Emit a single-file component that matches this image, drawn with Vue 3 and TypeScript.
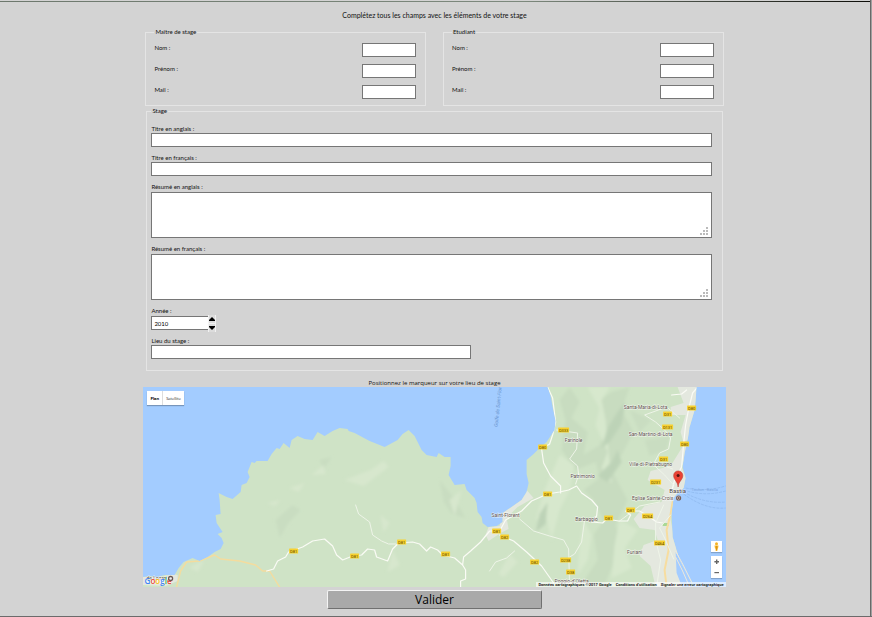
<script setup lang="ts">
import { reactive, ref } from 'vue'

interface Person { id: string; title: string; nom: string; prenom: string; mail: string }
interface Spot { text: string; x: number; y: number }

const people = reactive<Person[]>([
  { id: 'maitre', title: 'Maître de stage', nom: '', prenom: '', mail: '' },
  { id: 'etudiant', title: 'Etudiant', nom: '', prenom: '', mail: '' },
])
const stage = reactive({ titreEn: '', titreFr: '', resumeEn: '', resumeFr: '', annee: 2010, lieu: '' })
const mapType = ref<'plan' | 'satellite'>('plan')

const shields: Spot[] = [
  { text: 'D81', x: 294, y: 551 }, { text: 'D81', x: 355, y: 556 }, { text: 'D81', x: 402, y: 542 },
  { text: 'D81', x: 446, y: 554 }, { text: 'D81', x: 497, y: 531 }, { text: 'D82', x: 505, y: 537 },
  { text: 'D82', x: 535, y: 562 }, { text: 'D238', x: 566, y: 560 }, { text: 'D38', x: 571, y: 572 },
  { text: 'D333', x: 564, y: 430 }, { text: 'D80', x: 543, y: 447 }, { text: 'D81', x: 548, y: 494 },
  { text: 'D81', x: 609, y: 518 }, { text: 'D81', x: 631, y: 510 }, { text: 'D264', x: 648, y: 516 },
  { text: 'D464', x: 660, y: 543 }, { text: 'D231', x: 656, y: 482 }, { text: 'D31', x: 664, y: 459 },
  { text: 'D80', x: 685, y: 444 }, { text: 'D131', x: 668, y: 427 }, { text: 'D31', x: 668, y: 414 },
  { text: 'D80', x: 692, y: 408 },
]
const towns: Spot[] = [
  { text: 'Santa-Maria-di-Lota', x: 646, y: 409 }, { text: 'San-Martino-di-Lota', x: 651, y: 436 },
  { text: 'Ville-di-Pietrabugno', x: 651, y: 466 }, { text: 'Farinole', x: 574, y: 442 },
  { text: 'Patrimonio', x: 583, y: 478 }, { text: 'Barbaggio', x: 587, y: 521 },
  { text: 'Saint-Florent', x: 506, y: 517 }, { text: 'Furiani', x: 635, y: 554 },
  { text: 'Poggio-d’Oletta', x: 572, y: 583 }, { text: 'Eglise Sainte-Croix', x: 653, y: 500 },
]
const shieldWidth = (s: Spot): number => (s.text.length > 3 ? 11 : 9)
</script>

<template>
  <div class="page">
    <form class="content" @submit.prevent>
      <p class="intro">Complétez tous les champs avec les éléments de votre stage</p>

      <div class="people">
        <fieldset v-for="p in people" :key="p.id" class="person">
          <legend>{{ p.title }}</legend>
          <div class="row">
            <label :for="p.id + '-nom'">Nom :</label>
            <input :id="p.id + '-nom'" v-model="p.nom" type="text" />
          </div>
          <div class="row">
            <label :for="p.id + '-prenom'">Prénom :</label>
            <input :id="p.id + '-prenom'" v-model="p.prenom" type="text" />
          </div>
          <div class="row">
            <label :for="p.id + '-mail'">Mail :</label>
            <input :id="p.id + '-mail'" v-model="p.mail" type="email" />
          </div>
        </fieldset>
      </div>

      <fieldset class="stage">
        <legend>Stage</legend>
        <div class="field">
          <label for="titre-en">Titre en anglais :</label>
          <input id="titre-en" v-model="stage.titreEn" type="text" />
        </div>
        <div class="field">
          <label for="titre-fr">Titre en français :</label>
          <input id="titre-fr" v-model="stage.titreFr" type="text" />
        </div>
        <div class="field spaced">
          <label for="resume-en">Résumé en anglais :</label>
          <div class="area">
            <textarea id="resume-en" v-model="stage.resumeEn"></textarea>
            <svg class="grip" viewBox="0 0 8 8" aria-hidden="true"><path d="M6 0h2v2H6zM3 3h2v2H3zM6 3h2v2H6zM0 6h2v2H0zM3 6h2v2H3zM6 6h2v2H6z" /></svg>
          </div>
        </div>
        <div class="field spaced">
          <label for="resume-fr">Résumé en français :</label>
          <div class="area">
            <textarea id="resume-fr" v-model="stage.resumeFr"></textarea>
            <svg class="grip" viewBox="0 0 8 8" aria-hidden="true"><path d="M6 0h2v2H6zM3 3h2v2H3zM6 3h2v2H6zM0 6h2v2H0zM3 6h2v2H3zM6 6h2v2H6z" /></svg>
          </div>
        </div>
        <div class="field spaced">
          <label for="annee">Année :</label>
          <div class="year">
            <input id="annee" v-model.number="stage.annee" type="number" />
            <div class="spin">
              <button type="button" aria-label="Augmenter" @click="stage.annee++"><svg viewBox="0 0 6 8"><path d="M3 2 6 5v1H0V5z" /></svg></button>
              <button type="button" aria-label="Diminuer" @click="stage.annee--"><svg viewBox="0 0 6 8"><path d="M3 6 0 3V2h6v1z" /></svg></button>
            </div>
          </div>
        </div>
        <div class="field">
          <label for="lieu">Lieu du stage :</label>
          <input id="lieu" v-model="stage.lieu" class="lieu" type="text" />
        </div>
      </fieldset>

      <p class="caption">Positionnez le marqueur sur votre lieu de stage</p>

      <div class="map">
        <svg class="canvas" viewBox="143 387 583 200" preserveAspectRatio="xMidYMid slice">
          <defs>
            <filter id="soft" x="-20%" y="-20%" width="140%" height="140%"><feGaussianBlur stdDeviation="1.5" /></filter>
            <clipPath id="land">
              <path d="M143 577 150 576 158 577 165 575 175 575 179 568 184 562 193 558 200 561 208 557 215 552 221 549 224 543 222 538 218 534 223 532 217 523 216 515 221 514 220 500 219 493 227 497 233 499 241 492 242 485 247 483 250 477 248 472 252 462 255 463 257 461 268 461 272 454 277 448 280 449 284 443 290 448 292 440 298 436 305 439 313 440 318 432 325 436 333 431 340 428 348 429 349 431 355 433 370 441 385 447 398 440 403 434 409 430 415 436 418 442 422 450 427 455 437 457 439 453 445 457 451 457 451 466 449 475 455 485 465 484 467 490 475 498 477 503 478 512 482 517 483 523 488 527 497 526 503 522 503 513 512 507 522 500 527 492 529 483 527 474 527 460 534 454 540 448 547 442 551 436 555 430 556 421 553 407 551 396 548 387H697L696 400 695 410 690 427 688 440 685 453 683 467 686 478 684 488 678 493 674 498 672 513 673 537 680 560 692 582 694 587H143Z" />
            </clipPath>
          </defs>
          <path d="M143 387h583v200H143z" fill="#a3ccff" />
          <g clip-path="url(#land)">
            <path d="M143 387h583v200H143z" fill="#cfe3c6" />
            <g filter="url(#soft)">
              <path d="M570 387 580 402 572 418 588 432 584 455 600 445 606 425 600 400 612 392 630 387 622 410 634 432 622 455 612 470 628 500 616 525 622 545 604 587H580L598 560 594 535 604 520 594 500 584 490 600 478 596 462 576 470 562 450 566 420 560 400Z" fill="#c8dcc0" />
              <path d="M588 387 600 408 596 425 608 452 602 468 612 484 606 420 602 400 610 387ZM560 455 575 465 570 490 560 510 552 540 546 515 536 520 545 490ZM584 520 592 535 588 560 578 575 580 545ZM620 520 638 530 625 548 632 568 612 578 615 545Z" fill="#d7e8cd" />
              <path d="M618 412 626 402 622 424 610 442 602 448 608 428ZM598 476 612 462 618 450 622 462 608 482ZM540 514 548 502 546 524 536 532Z" fill="#bdd3b7" />
              <path d="M276 520 293 505 301 510 288 524 280 538ZM440 480 456 500 466 518 452 514 444 502ZM320 460 332 457 324 470ZM630 410 652 420 640 432ZM645 440 670 437 667 450 650 456Z" fill="#c9ddc1" />
              <path d="M510 554 518 562 504 577 499 574ZM268 503 281 500 275 506ZM290 488 305 483 299 492ZM312 475 324 465 326 474ZM345 480 371 470 384 461 389 467 364 486ZM381 515 390 523 384 532ZM393 550 400 565 388 572ZM190 567 205 560 198 572ZM450 500 462 490 455 516Z" fill="#d7e7cd" />
            </g>
            <g fill="#e4e8df">
              <path d="M503 513 527 490 534 498 518 507 507 518 509 529 501 533 489 541 486 535 489 527 500 526Z" />
              <path d="M678 387H698V412L690 427 690 438 684 443 681 432 686 415 672 415 671 407 684 403ZM684 445H690L682 467 687 480 684 492 674 498 671 520 677 550 693 587H656L651 566 640 556 644 545 658 540 655 530 640 528 634 519 645 506 662 502 665 490 648 480 651 471 671 466Z" />
              <path d="M143 577 164 577 172 574 178 575 178 581 166 586 143 585Z" />
            </g>
            <path d="M676 552 687 572 694 588 683 588 677 573Z" fill="#a3ccff" />
            <path d="M663 523h6v3h-6z" fill="#a9d897" />
            <g fill="none" stroke-linejoin="round" stroke-linecap="round">
              <path d="M177 587 181 571 187 562 200 561 215 555 221 559 240 561 256 565 263 571 270 571 280 587" stroke="#f4dc9e" stroke-width="1.4" />
              <path d="M667 587 665 570 669 550 667 530 671 514 673 502" stroke="#f7dda0" stroke-width="2" />
              <g stroke="#fafbf5" stroke-width="1.2">
                <path d="M267 571 274 569 278 561 286 557 289 552 303 547 313 541 325 539 333 546 337 555 343 560 353 556 362 555 368 549 375 550 377 557 388 561 393 549 399 543 413 542 420 544 427 551 431 547 438 550 443 555 455 558 463 565 466 570 466 579 461 581 461 587" />
                <path d="M463 565 464 557 471 551 481 542 490 531 500 531 506 520 522 511 532 501 548 494 560 492 569 490 577 486 582 493 592 500 598 507 597 516 592 522 603 523 607 519 619 521 628 521 631 515 626 511 640 511 650 517 657 522 663 523" />
                <path d="M500 535 514 541 527 552 542 566 554 583M548 387 553 398 556 422 553 435 550 444 542 449 544 463 551 476 561 486 561 493" />
                <path d="M698 387 693 393 689 409 686 425 684 444 682 467 675 480 672 492M672 395 682 394 687 390" />
              </g>
              <g stroke="#eef4e8">
                <path d="M356 505 359 514 370 522 373 535 382 541 389 544 396 544M557 430 578 433 577 449 570 459 578 466 579 475 576 484M520 519 534 531 550 536 564 540 569 549 570 587M585 520 582 542 575 554 570 557M490 571 496 562 507 558 515 551" />
                <path d="M680 418 667 407 645 415 656 422 666 431 671 438 669 449 660 453 655 462 673 469M651 462 665 475 674 485M620 521 640 506 660 502M664 505 656 523 656 540 661 560 657 587M671 515 660 528 666 540 674 559" />
              </g>
            </g>
          </g>
          <path d="M676 551 683 564 692 582M690 587 683 571 676 557" fill="none" stroke="#ece8dc" />
          <g fill="none" stroke="#8ab4ea" stroke-width=".6" stroke-dasharray="3 1">
            <path d="M686 488Q706 492 726 486M684 490Q705 497 726 491M684 492Q705 504 726 502M684 494Q706 510 726 508" />
          </g>
          <g v-for="(s, i) in shields" :key="'s' + i">
            <rect :x="s.x - shieldWidth(s) / 2" :y="s.y - 2.5" :width="shieldWidth(s)" height="5" rx=".5" fill="#f8d12f" />
            <text class="shield" :x="s.x" :y="s.y + 1.5">{{ s.text }}</text>
          </g>
          <text v-for="(t, i) in towns" :key="'t' + i" class="town" :x="t.x" :y="t.y">{{ t.text }}</text>
          <text class="city" x="678" y="493">Bastia</text>
          <text class="sea" transform="translate(498 427) rotate(-84)">Golfe de Saint-Florent</text>
          <text class="ferry" x="692" y="491">Toulon - Bastia</text>
          <circle cx="679" cy="498" r="2" fill="#fff" stroke="#7b5f57" stroke-width="1.2" /><path d="M678 499v-1.500l1-1 1 1V499z" fill="#7b5f57" />
          <path d="M678.500 487C678 481 674 480 674 475.500A4.600 4.600 0 0 1 683.200 475.500C683.200 480 679 481 678.500 487Z" fill="#ea4335" stroke="#b3322a" stroke-width=".5" />
          <circle cx="678.500" cy="475.500" r="1.500" fill="#561310" />
          <text class="town" x="157" y="580">de Lozari</text>
          <g class="google halo" aria-hidden="true"><path d="M148 581h21" /></g>
          <text class="google" x="145" y="584"><tspan fill="#4285f4">G</tspan><tspan fill="#ea4335">o</tspan><tspan fill="#fbbc05">o</tspan><tspan fill="#4285f4">g</tspan><tspan fill="#34a853">l</tspan><tspan fill="#ea4335">e</tspan></text>
          <circle cx="171" cy="578.500" r="2" fill="#eee" stroke="#6d5a55" stroke-width="1.300" />
        </svg>
        <div class="types">
          <button type="button" :class="{ active: mapType === 'plan' }" @click="mapType = 'plan'">Plan</button>
          <button type="button" :class="{ active: mapType === 'satellite' }" @click="mapType = 'satellite'">Satellite</button>
        </div>
        <div class="controls">
          <button class="pegman" type="button" aria-label="Street View">
            <svg viewBox="0 0 11 11"><circle cx="5.500" cy="2.800" r="1.500" fill="#f5b324" /><path d="M3.500 4.500h4l-.5 3h-.5L6.300 10H4.700L4.500 7.500H4z" fill="#f5b324" /><path d="M5 5h1.200v4H5z" fill="#d99416" /></svg>
          </button>
          <div class="zoom">
            <button type="button" aria-label="Zoom avant"><svg viewBox="0 0 11 11"><path d="M5 3.500h1.400V5H8v1.400H6.400V8H5V6.400H3.400V5H5z" /></svg></button>
            <button type="button" aria-label="Zoom arrière"><svg viewBox="0 0 11 11"><path d="M3.400 5H8v1.200H3.400z" /></svg></button>
          </div>
        </div>
        <div class="credits">
          <span>Données cartographiques ©2017 Google</span>
          <a href="#">Conditions d'utilisation</a>
          <a href="#">Signaler une erreur cartographique</a>
        </div>
      </div>

      <button class="submit" type="submit">Valider</button>
    </form>
  </div>
</template>

<style>
body { background: #d3d3d3; }
</style>

<style scoped>
* { box-sizing: border-box; }
.page {
  min-height: 100vh;
  padding: 1px 3px 0 0;
  display: flex;
  flex-direction: column;
  font-family: Lato, "Open Sans", sans-serif;
  font-size: 6px;
  line-height: 8px;
  color: #111;
  background: linear-gradient(to right, #6d786d, #7d897d 60%, #0d0d08) 0 1px / 100% 1px no-repeat, #d3d3d3;
  border-bottom: 1px solid #6b6b6b;
  box-shadow: inset -1px 0 #a0a0a0, inset -2px 0 #696969;
}
.content {
  width: 67%;
  margin: 0 auto;
  padding: 9px 0 7px;
  display: flex;
  flex-direction: column;
}
.intro, .caption { margin: 0; text-align: center; }
.intro { font-size: 7px; line-height: 10px; margin-bottom: 8px; }
.caption { font-family: "Open Sans", sans-serif; line-height: 8px; margin-top: 8px; }
fieldset { margin: 0; min-width: 0; border: 1px solid #e4e4e4; }
legend { padding: 0 1px; line-height: 8px; }
input, textarea {
  display: block;
  margin: 0;
  padding: 0 2px;
  border: 1px solid #767676;
  border-radius: 0;
  background: #fff;
  font: inherit;
  color: #000;
  outline: none;
}
input { height: 14px; }
.people { display: grid; grid-template-columns: 1fr 1fr; gap: 17px; padding: 0 2px; margin-bottom: 1px; }
.person { padding: 7px 9px 6px 8px; display: flex; flex-direction: column; gap: 7px; }
.row { display: flex; justify-content: space-between; align-items: flex-start; }
.row label { margin-top: 1px; }
.row input { width: 54px; }
.stage { margin: 0 3px; padding: 10px 10px 11px 4px; }
.field { display: flex; flex-direction: column; }
.field + .field { margin-top: 7px; }
.spaced { gap: 1px; }
.stage .lieu { width: 57%; }
.area { position: relative; }
.area textarea { width: 100%; height: 46px; resize: none; }
.grip { position: absolute; right: 4px; bottom: 3px; width: 8px; height: 8px; fill: #bbb; }
.year { display: flex; align-items: center; height: 14px; }
.year input { width: 57px; border-right: 0; appearance: textfield; -moz-appearance: textfield; }
.year input::-webkit-inner-spin-button { appearance: none; -webkit-appearance: none; }
.spin { display: grid; grid-template-rows: 8px 8px; gap: 1px; padding: 0 1px; background: #f2f2f2; }
.spin button { width: 6px; height: 8px; padding: 0; border: 0; background: #dcdcdc; display: block; }
.spin svg { display: block; width: 6px; height: 8px; }
.map { position: relative; height: 200px; overflow: hidden; background: #a3ccff; font-family: Roboto, sans-serif; }
.canvas { display: block; width: 100%; height: 100%; }
.shield { font: 4px Roboto, sans-serif; text-anchor: middle; fill: #5a4800; }
.town { font: 5px Roboto, sans-serif; text-anchor: middle; fill: #5d504c; stroke: #ffffffaa; stroke-width: 1px; paint-order: stroke; }
.city { font: 6px Roboto, sans-serif; text-anchor: middle; fill: #4d4340; stroke: #ffffffaa; stroke-width: 1px; paint-order: stroke; }
.sea { font: italic 5px Roboto, sans-serif; fill: #6a95cf; }
.ferry { font: 4px Roboto, sans-serif; fill: #7fa8df; }
.google { font: 600 8px "Open Sans", sans-serif; }
.halo { fill: none; stroke: #ffffff99; stroke-width: 5px; stroke-linecap: round; }
.types { position: absolute; left: 4px; top: 4px; display: flex; box-shadow: 0 1px 1px #0004; background: #fff; }
.types button { height: 14px; padding: 0 3px; border: 0; background: none; font: 500 4px "Open Sans", sans-serif; color: #222; }
.types button + button { border-left: 1px solid #ddd; }
.types .active { font-weight: 700; color: #000; }
.controls { position: absolute; right: 4px; bottom: 9px; display: flex; flex-direction: column; gap: 4px; }
.controls button { display: block; width: 11px; height: 11px; padding: 0; border: 0; background: #fff; }
.controls svg { display: block; width: 11px; height: 11px; fill: #666; }
.pegman, .zoom { box-shadow: 0 1px 1px #0003; }
.credits { position: absolute; right: 0; bottom: 0; display: flex; gap: 4px; padding: 0 2px; background: #ffffffa0; font-size: 4px; line-height: 5px; font-weight: 700; color: #222; white-space: nowrap; }
.credits a { color: inherit; text-decoration: none; }
.submit {
  align-self: center;
  width: 37%;
  height: 19px;
  margin-top: 3px;
  padding: 0;
  border: 1px solid #707070;
  border-top-color: #f4f4f4;
  border-left-color: #f4f4f4;
  border-radius: 2px;
  background: #a9a9a9;
  font: 12px "Open Sans", sans-serif;
  line-height: 16px;
  color: #000;
}
</style>
